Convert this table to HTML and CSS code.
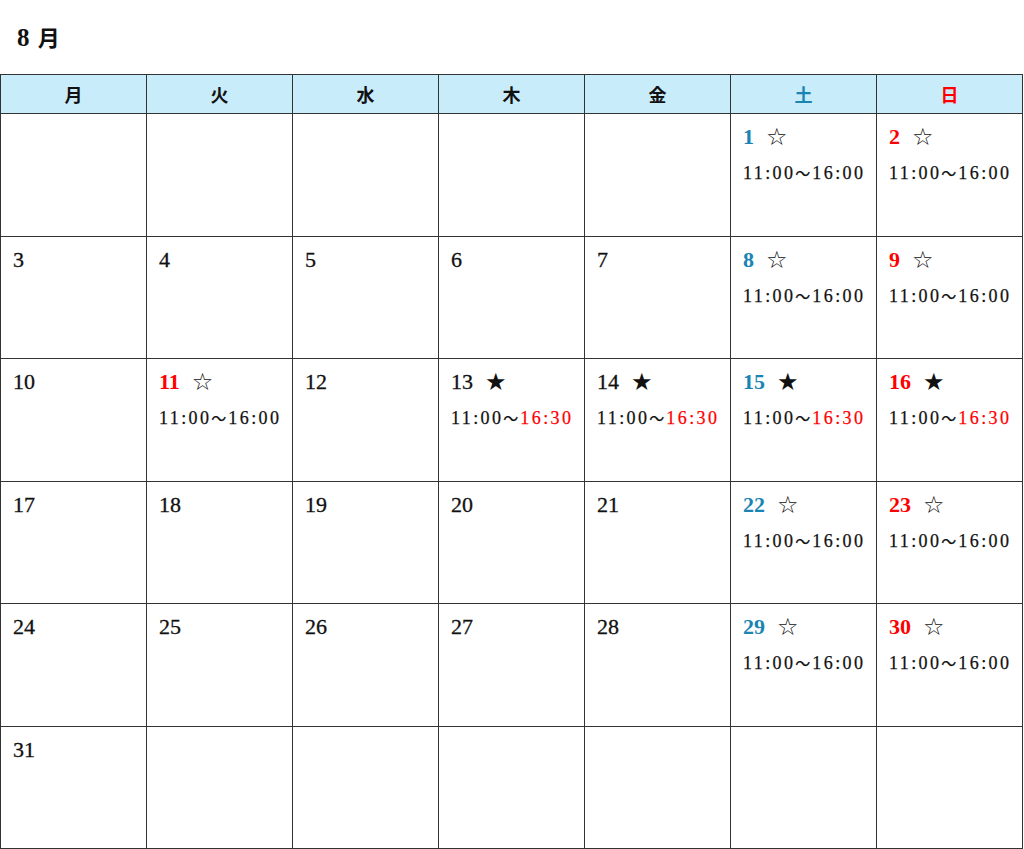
FILE: index.html
```html
<!DOCTYPE html>
<html lang="ja">
<head>
<meta charset="utf-8">
<title>8月</title>
<link rel="stylesheet" href="styles.css">
</head>
<body>
<div class="page">
  <h1 class="title"><span class="num">8</span> <span class="mon">月</span></h1>
  <div class="cal">
    <div class="hd">月</div>
    <div class="hd">火</div>
    <div class="hd">水</div>
    <div class="hd">木</div>
    <div class="hd">金</div>
    <div class="hd sat">土</div>
    <div class="hd sun">日</div>

    <div class="cell"></div>
    <div class="cell"></div>
    <div class="cell"></div>
    <div class="cell"></div>
    <div class="cell"></div>
    <div class="cell"><div class="day"><span class="d sat">1</span><span class="star">☆</span></div><div class="time">11:00<span class="tl">～</span>16:00</div></div>
    <div class="cell"><div class="day"><span class="d sun">2</span><span class="star">☆</span></div><div class="time">11:00<span class="tl">～</span>16:00</div></div>

    <div class="cell"><div class="day"><span class="d">3</span></div></div>
    <div class="cell"><div class="day"><span class="d">4</span></div></div>
    <div class="cell"><div class="day"><span class="d">5</span></div></div>
    <div class="cell"><div class="day"><span class="d">6</span></div></div>
    <div class="cell"><div class="day"><span class="d">7</span></div></div>
    <div class="cell"><div class="day"><span class="d sat">8</span><span class="star">☆</span></div><div class="time">11:00<span class="tl">～</span>16:00</div></div>
    <div class="cell"><div class="day"><span class="d sun">9</span><span class="star">☆</span></div><div class="time">11:00<span class="tl">～</span>16:00</div></div>

    <div class="cell"><div class="day"><span class="d">10</span></div></div>
    <div class="cell"><div class="day"><span class="d sun">11</span><span class="star">☆</span></div><div class="time">11:00<span class="tl">～</span>16:00</div></div>
    <div class="cell"><div class="day"><span class="d">12</span></div></div>
    <div class="cell"><div class="day"><span class="d">13</span><span class="star">★</span></div><div class="time">11:00<span class="tl">～</span><span class="late">16:30</span></div></div>
    <div class="cell"><div class="day"><span class="d">14</span><span class="star">★</span></div><div class="time">11:00<span class="tl">～</span><span class="late">16:30</span></div></div>
    <div class="cell"><div class="day"><span class="d sat">15</span><span class="star">★</span></div><div class="time">11:00<span class="tl">～</span><span class="late">16:30</span></div></div>
    <div class="cell"><div class="day"><span class="d sun">16</span><span class="star">★</span></div><div class="time">11:00<span class="tl">～</span><span class="late">16:30</span></div></div>

    <div class="cell"><div class="day"><span class="d">17</span></div></div>
    <div class="cell"><div class="day"><span class="d">18</span></div></div>
    <div class="cell"><div class="day"><span class="d">19</span></div></div>
    <div class="cell"><div class="day"><span class="d">20</span></div></div>
    <div class="cell"><div class="day"><span class="d">21</span></div></div>
    <div class="cell"><div class="day"><span class="d sat">22</span><span class="star">☆</span></div><div class="time">11:00<span class="tl">～</span>16:00</div></div>
    <div class="cell"><div class="day"><span class="d sun">23</span><span class="star">☆</span></div><div class="time">11:00<span class="tl">～</span>16:00</div></div>

    <div class="cell"><div class="day"><span class="d">24</span></div></div>
    <div class="cell"><div class="day"><span class="d">25</span></div></div>
    <div class="cell"><div class="day"><span class="d">26</span></div></div>
    <div class="cell"><div class="day"><span class="d">27</span></div></div>
    <div class="cell"><div class="day"><span class="d">28</span></div></div>
    <div class="cell"><div class="day"><span class="d sat">29</span><span class="star">☆</span></div><div class="time">11:00<span class="tl">～</span>16:00</div></div>
    <div class="cell"><div class="day"><span class="d sun">30</span><span class="star">☆</span></div><div class="time">11:00<span class="tl">～</span>16:00</div></div>

    <div class="cell"><div class="day"><span class="d">31</span></div></div>
    <div class="cell"></div>
    <div class="cell"></div>
    <div class="cell"></div>
    <div class="cell"></div>
    <div class="cell"></div>
    <div class="cell"></div>
  </div>
</div>
</body>
</html>
```

FILE: styles.css
```css
html, body {
  margin: 0;
  padding: 0;
  background: #ffffff;
}

body {
  font-family: "Liberation Serif", "Noto Sans CJK JP", serif;
  color: #111111;
}

.page {
  width: 1024px;
}

.title {
  margin: 0;
  height: 74px;
  box-sizing: border-box;
  padding: 24px 0 0 17px;
  font-size: 25px;
  line-height: 28px;
  font-weight: bold;
  font-family: "Liberation Serif", "Noto Sans CJK JP", serif;
  color: #111111;
}

.title .num {
  margin-right: 2px;
}

.title .mon {
  font-size: 22px;
}

.cal {
  display: grid;
  grid-template-columns: repeat(7, 146px);
  grid-template-rows: 39px repeat(6, 122.5px);
  width: max-content;
  border-left: 1px solid #333333;
  border-top: 1px solid #333333;
}

.hd,
.cell {
  border-right: 1px solid #333333;
  border-bottom: 1px solid #333333;
}

.hd {
  background: #c9ecfa;
  display: flex;
  align-items: center;
  justify-content: center;
  font-family: "Noto Sans CJK JP", sans-serif;
  font-weight: bold;
  font-size: 18px;
  color: #111111;
}

.hd.sat {
  color: #1a84b4;
}

.hd.sun {
  color: #ff0000;
}

.cell {
  padding: 11px 0 0 12px;
}

.day {
  display: flex;
  align-items: center;
  height: 24px;
  line-height: 24px;
}

.d {
  font-size: 22px;
  color: #111111;
  -webkit-text-stroke: 0.3px currentColor;
}

.d.sat {
  color: #1a84b4;
  font-weight: bold;
  -webkit-text-stroke: 0;
}

.d.sun {
  color: #ff0000;
  font-weight: bold;
  -webkit-text-stroke: 0;
}

.star {
  margin-left: 12px;
  font-family: "DejaVu Sans", sans-serif;
  font-size: 24px;
  line-height: 24px;
  color: #111111;
}

.time {
  margin-top: 14px;
  font-size: 18px;
  line-height: 20px;
  letter-spacing: 2.4px;
  white-space: nowrap;
  color: #111111;
  -webkit-text-stroke: 0.25px currentColor;
}

.tl {
  font-size: 15px;
  letter-spacing: 1px;
  margin-right: 1px;
}

.late {
  color: #ff0000;
}
```
